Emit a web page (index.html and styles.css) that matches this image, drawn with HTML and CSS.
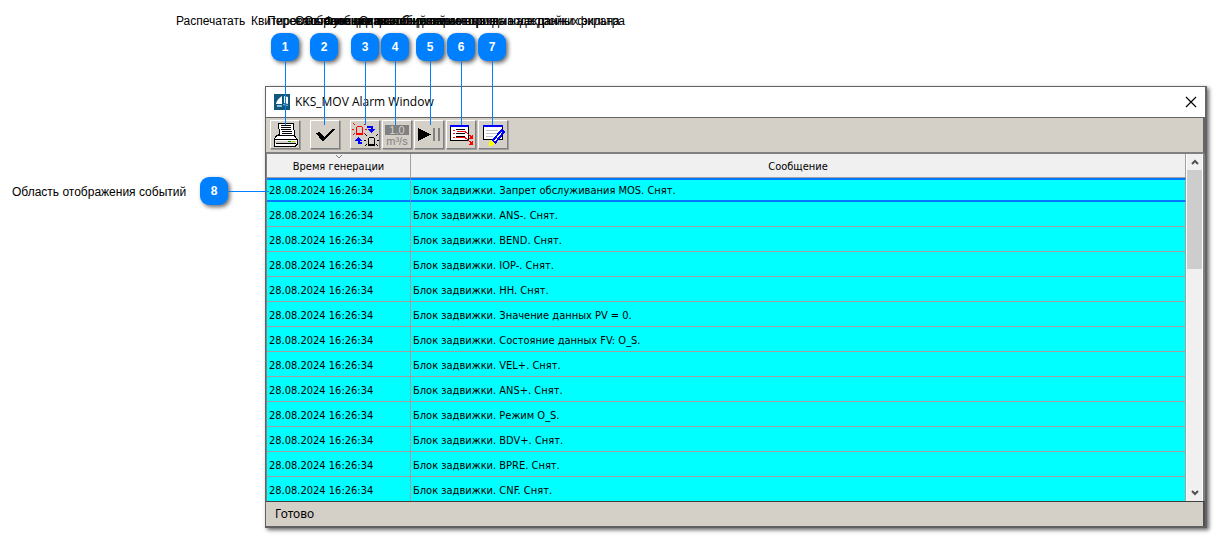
FILE: index.html
```html
<!DOCTYPE html>
<html lang="ru">
<head>
<meta charset="utf-8">
<title>KKS_MOV Alarm Window</title>
<link rel="stylesheet" href="styles.css">
</head>
<body>
<main class="figure">
  <section class="window">
    <header class="titlebar">
      <svg class="logo" width="16" height="16" viewBox="0 0 16 16"><path fill="#12567c" d="M0 0h16v16H0z"/><path fill="#fff" d="M8 2v8H2q1-5 6-8zM10 2l4 1v7l-4-1z"/><path fill="#8fc0d4" d="M3 11h5v2H3zM9 10l5 1v1l-5-1z"/></svg>
      <h1 class="title">KKS_MOV Alarm Window</h1>
      <button class="close" aria-label="Закрыть"><svg width="12" height="12" viewBox="0 0 12 12"><path d="M1 1l10 10M11 1L1 11" stroke="#000" stroke-width="1.2"/></svg></button>
    </header>
    <div class="toolbar">
      <button class="tool" aria-label="Распечатать"><svg viewBox="0 0 30 29"><path d="M8 3h15l2 13H7l3-2z" fill="#fff" stroke="#000"/><path d="M11 5.500h10M11 7.500h10M11 9.500h10M12 11.500h10M12 13.500h10" stroke="#000"/><path d="M7 15.500h17l3 4v5l-2 2H5l-1-2v-5z" fill="#fff" stroke="#000"/><path d="M4 19.500h23M6 23.500h20" stroke="#000"/><path d="M5 21h21v2H5z" fill="#d4d0c8"/><path d="M18 21h3v1h-3z" fill="#080"/><path d="M22 21h3v1h-3z" fill="#cc0"/></svg></button>
      <button class="tool apart" aria-label="Квитировать"><svg viewBox="0 0 30 29"><path d="M6 13l3-1 5 5 9-8h2L14 21h-2z" fill="#000"/></svg></button>
      <button class="tool apart" aria-label="Переключить"><svg viewBox="0 0 30 29"><g fill="none"><path d="M7.500 6.500h4l1 1v6h-6v-6zM6 14.500h7M5 5L3 3M4 9.500H2M5 13l-2 2M14 5l2-2M15 9.500h2M14 13l2 2" stroke="red"/><path d="M19.500 17.500h4l1 1v6h-6v-6zM18 25.500h7M17 16l-2-2M16 20.500h-2M17 24l-2 2M26 16l2-2M27 20.500h2M26 24l2 2" stroke="#000"/><path d="M17 6.500h4.500v3M12 23H9v-3" stroke="#00f" stroke-width="2"/></g><path d="M18 9h7l-3.500 4zM5 21h7l-3.500-4z" fill="#00f"/></svg></button>
      <button class="tool" aria-label="Значения"><svg viewBox="0 0 30 29"><path d="M3 5h24v10H3z" fill="#808080"/><text class="unit" x="15" y="14" fill="#d4d0c8">1.0</text><text class="unit" x="15" y="25" fill="#808080">m³/s</text></svg></button>
      <button class="tool" aria-label="Пауза"><svg viewBox="0 0 30 29"><path d="M4 8l13 6.500L4 21z"/><path d="M19 8h2v13h-2zM24 8h2v13h-2z" fill="#808080"/></svg></button>
      <button class="tool" aria-label="Прокрутка"><svg viewBox="0 0 30 29"><path d="M4.500 6.500h18v14h-18z" fill="#fff" stroke="#000"/><path d="M4 5h19v2H4z" fill="#00f"/><path d="M10 9.500h9M10 13.500h9M10 16.500h9" stroke="#000"/><path d="M7 10.500h2M7 13.500h2M7 17.500h2M11 11.500h8l6 5M10 17.500h9l6 5" fill="none" stroke="red"/><path d="M27 14v5h-5zM27 20v5h-5z" fill="red"/></svg></button>
      <button class="tool" aria-label="Настройка"><svg viewBox="0 0 30 29"><path d="M5.500 6.500h19v13h-19z" fill="#fff" stroke="#000"/><path d="M5 5h20v2H5z" fill="#00f"/><path d="M8 10.500h12M8 13.500h11M8 16.500h7" stroke="#c0c0c0"/><path d="M14 21L24 10l2 2-9 11z" fill="#fff" stroke="#00f" stroke-width="2"/><path d="M13 20l4 4-4 2h-2v-3z" fill="#ff0"/></svg></button>
    </div>
    <div class="view">
      <table class="events">
        <thead><tr><th class="time" scope="col"><svg class="sort" width="8" height="5" viewBox="0 0 8 5"><path d="M1 1l3 3 3-3" fill="none" stroke="#808080"/></svg>Время генерации</th><th scope="col">Сообщение</th></tr></thead>
        <tbody>
          <tr class="current"><td>28.08.2024 16:26:34</td><td>Блок задвижки. Запрет обслуживания MOS. Снят.</td></tr>
          <tr><td>28.08.2024 16:26:34</td><td>Блок задвижки. ANS-. Снят.</td></tr>
          <tr><td>28.08.2024 16:26:34</td><td>Блок задвижки. BEND. Снят.</td></tr>
          <tr><td>28.08.2024 16:26:34</td><td>Блок задвижки. IOP-. Снят.</td></tr>
          <tr><td>28.08.2024 16:26:34</td><td>Блок задвижки. HH. Снят.</td></tr>
          <tr><td>28.08.2024 16:26:34</td><td>Блок задвижки. Значение данных PV = 0.</td></tr>
          <tr><td>28.08.2024 16:26:34</td><td>Блок задвижки. Состояние данных FV: O_S.</td></tr>
          <tr><td>28.08.2024 16:26:34</td><td>Блок задвижки. VEL+. Снят.</td></tr>
          <tr><td>28.08.2024 16:26:34</td><td>Блок задвижки. ANS+. Снят.</td></tr>
          <tr><td>28.08.2024 16:26:34</td><td>Блок задвижки. Режим O_S.</td></tr>
          <tr><td>28.08.2024 16:26:34</td><td>Блок задвижки. BDV+. Снят.</td></tr>
          <tr><td>28.08.2024 16:26:34</td><td>Блок задвижки. BPRE. Снят.</td></tr>
          <tr><td>28.08.2024 16:26:34</td><td>Блок задвижки. CNF. Снят.</td></tr>
        </tbody>
      </table>
      <div class="scrollbar">
        <button class="arrow" aria-label="Вверх"><svg width="8" height="6" viewBox="0 0 8 6"><path d="M1 5l3-3 3 3" fill="none" stroke="#505050" stroke-width="2"/></svg></button>
        <div class="thumb"></div>
        <button class="arrow down" aria-label="Вниз"><svg width="8" height="6" viewBox="0 0 8 6"><path d="M1 1l3 3 3-3" fill="none" stroke="#505050" stroke-width="2"/></svg></button>
      </div>
    </div>
    <footer class="status">Готово</footer>
  </section>

  <span class="label l1">Распечатать</span>
  <span class="label l2">Квитировать сообщения</span>
  <span class="label l3">Переключение вида сообщений</span>
  <span class="label l4">Отображение значений параметров</span>
  <span class="label l5">Остановка и возобновление вывода на экран</span>
  <span class="label l6">Функция автообновления при выводе данных экрана</span>
  <span class="label l7">Открытие диалогового окна настройки фильтра</span>
  <span class="label l8">Область отображения событий</span>

  <span class="pin p1">1</span>
  <span class="pin p2">2</span>
  <span class="pin p3">3</span>
  <span class="pin p4">4</span>
  <span class="pin p5">5</span>
  <span class="pin p6">6</span>
  <span class="pin p7">7</span>
  <span class="pin p8">8</span>
</main>
</body>
</html>
```
FILE: styles.css
```css
* { box-sizing: border-box; }
body {
  margin: 0;
  background: #fff;
  color: #000;
  font-family: "Liberation Sans", Arial, sans-serif;
}
button { padding: 0; border: 0; background: none; }
.figure { position: relative; padding: 86px 9px 9px 265px; }

.window {
  border: 1px solid #646464;
  border-right: 2px solid #646464;
  border-bottom: 2px solid #606060;
  background: #fff;
  box-shadow: 2px 2px 4px rgba(0, 0, 0, 0.6);
}
.titlebar {
  display: flex;
  align-items: center;
  gap: 5px;
  height: 30px;
  padding: 0 8px;
}
.title {
  flex: 1;
  margin: 0;
  font: 12px/16px "Open Sans", "Noto Sans", sans-serif;
}
.close { display: flex; }

.toolbar {
  display: flex;
  gap: 2px;
  height: 37px;
  padding: 2px 4px;
  border-top: 1px solid #646464;
  border-right: 2px solid #646464;
  border-bottom: 2px solid #808080;
  background: #d4d0c8;
}
.tool {
  width: 30px;
  height: 29px;
  border: 1px solid;
  border-color: #fff #808080 #808080 #fff;
  box-shadow: 1px 1px 0 #a0a0a0;
}
.tool.apart { margin-left: 8px; }
.tool svg {
  display: block;
  width: 30px;
  height: 29px;
  margin: -1px;
  fill: #000;
  shape-rendering: crispEdges;
}
.unit { font: 11px "Liberation Sans", sans-serif; text-anchor: middle; }

.view {
  display: flex;
  border-right: 2px solid #808080;
  border-left: 1px solid #808080;
}
.events {
  flex: 1;
  table-layout: fixed;
  border-collapse: separate;
  border-spacing: 0;
  font: 11px/14px "DejaVu Sans Condensed", "DejaVu Sans", sans-serif;
}
.events th {
  position: relative;
  height: 24px;
  padding: 2px 0 0;
  border-right: 1px solid #a0a0a0;
  border-bottom: 1px solid #a0a0a0;
  background: #f0f0f0;
  font-weight: normal;
}
.events .time { width: 144px; }
.sort { position: absolute; top: 0; left: 68px; }
.events td {
  height: 25px;
  padding: 3px 2px 0;
  border-right: 1px solid #a0a0a0;
  border-bottom: 1px solid #a0a0a0;
  background: #0ff;
}
.events .current td {
  height: 24px;
  padding-top: 1px;
  border-top: 2px solid #0078ff;
  border-bottom: 2px solid #0078ff;
}
.events tr:last-child td { height: 24px; border-bottom: 0; }

.scrollbar {
  display: flex;
  flex-direction: column;
  width: 17px;
  border-right: 1px solid #fff;
  border-left: 1px solid #fff;
  background: #f0f0f0;
}
.arrow {
  display: flex;
  align-items: center;
  justify-content: center;
  height: 16px;
}
.thumb { height: 99px; background: #cdcdcd; }
.down { margin-top: auto; }

.status {
  height: 25px;
  padding: 0 9px;
  border-top: 1px solid #404040;
  border-right: 2px solid #505050;
  background: #d4d0c8;
  font: 12px/24px "Noto Sans", sans-serif;
}

.label {
  position: absolute;
  top: 13px;
  font-size: 12px;
  line-height: 16px;
  white-space: nowrap;
}
.l1 { left: 176px; }
.l2 { left: 251px; }
.l3 { left: 267px; }
.l4 { left: 295px; }
.l5 { left: 304px; }
.l6 { left: 324px; }
.l7 { left: 359px; }
.l8 { top: 184px; left: 12px; }

.pin {
  position: absolute;
  top: 33px;
  width: 28px;
  height: 28px;
  border-radius: 9px;
  background: #0080ff;
  box-shadow: 2px 2px 4px rgba(0, 0, 0, 0.6);
  color: #fff;
  font-size: 12px;
  font-weight: bold;
  line-height: 28px;
  text-align: center;
}
.pin::after {
  content: "";
  position: absolute;
  top: 28px;
  left: 14px;
  width: 1px;
  height: 64px;
  background: #0080ff;
}
.p1 { left: 271px; }
.p2 { left: 310px; }
.p3 { left: 351px; }
.p4 { left: 381px; }
.p5 { left: 416px; }
.p6 { left: 447px; }
.p7 { left: 478px; }
.p8 { top: 177px; left: 200px; }
.p8::after { top: 14px; left: 28px; width: 41px; height: 1px; }
```
